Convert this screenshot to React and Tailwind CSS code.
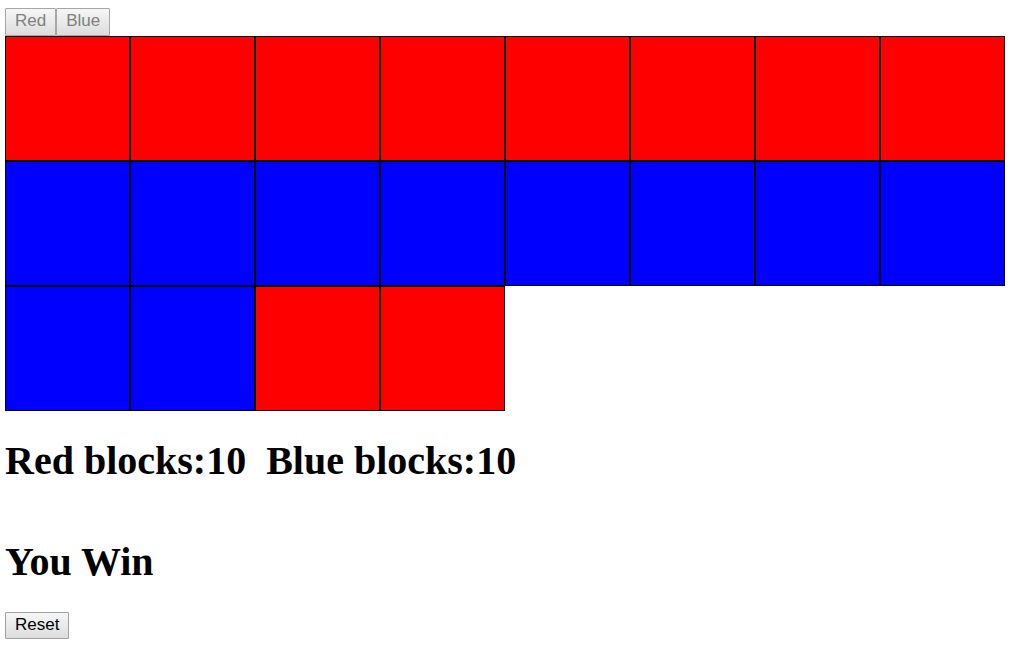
const blocks = [
  ...Array(8).fill("red"),
  ...Array(10).fill("blue"),
  ...Array(2).fill("red"),
];

const buttonBase =
  "rounded-[1px] border bg-linear-to-b from-[#f6f6f6] to-[#dddddd] px-[9px] pb-0.5 text-[17px] leading-6";

function Block({ color }) {
  return (
    <div
      className={
        color === "red"
          ? "h-[125px] w-[125px] border border-black bg-[#ff0000]"
          : "h-[125px] w-[125px] border border-black bg-[#0000ff]"
      }
    />
  );
}

export default function App() {
  const red = blocks.filter((c) => c === "red").length;
  const blue = blocks.length - red;
  return (
    <main className="bg-white pt-2 pl-[5px] font-['Liberation_Sans',Arial,sans-serif] text-black">
      <div className="flex">
        <button disabled className={`${buttonBase} h-7 border-[#a6a6a6] text-[#808080]`}>
          Red
        </button>
        <button disabled className={`${buttonBase} h-7 border-[#a6a6a6] text-[#808080]`}>
          Blue
        </button>
      </div>
      <div className="flex flex-wrap">
        {blocks.map((color, i) => (
          <Block key={i} color={color} />
        ))}
      </div>
      <div className="mt-[27px] flex gap-5 font-['Liberation_Serif','Times_New_Roman',serif] text-[40px] leading-[46px] font-bold">
        <h1>Red blocks:{red}</h1>
        <h1>Blue blocks:{blue}</h1>
      </div>
      <h1 className="mt-[55px] font-['Liberation_Serif','Times_New_Roman',serif] text-[40px] leading-[46px] font-bold">
        You Win
      </h1>
      <button className={`${buttonBase} mt-[27px] block h-[27px] border-[#a0a0a0] text-black`}>
        Reset
      </button>
    </main>
  );
}
